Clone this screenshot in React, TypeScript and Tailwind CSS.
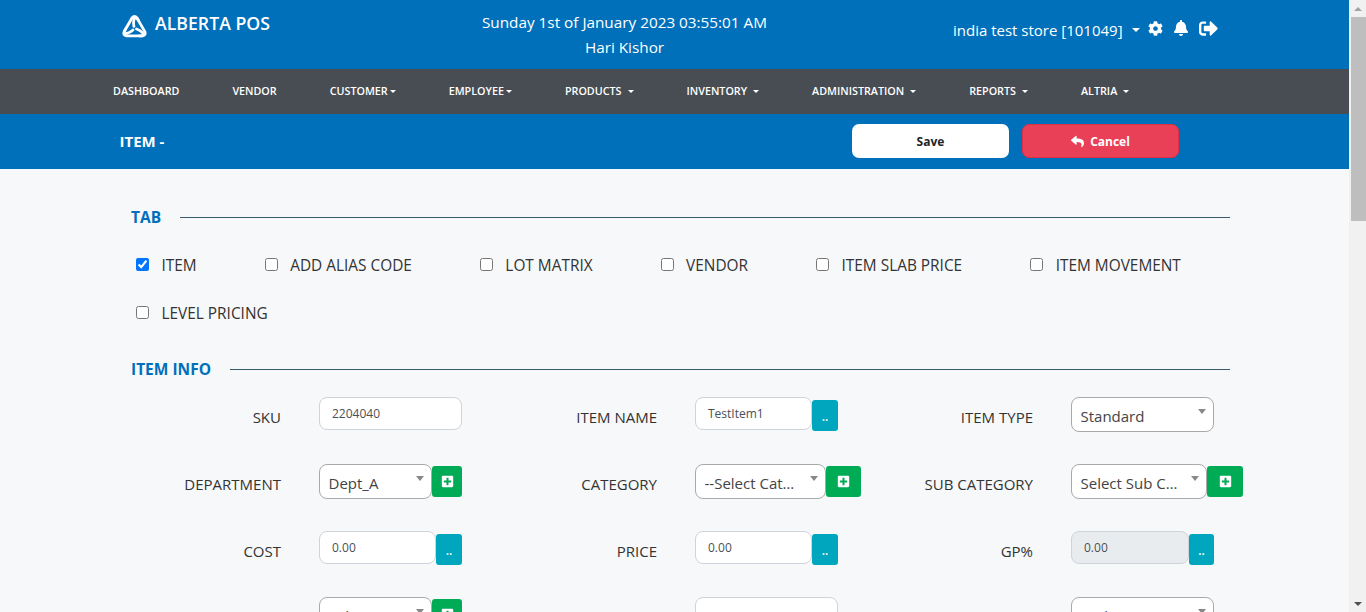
import { ReactNode } from "react";
import { FaBell, FaCog, FaPlusSquare, FaReply } from "react-icons/fa";

const navItems = [
  { label: "DASHBOARD" },
  { label: "VENDOR" },
  { label: "CUSTOMER", caret: "tight" },
  { label: "EMPLOYEE", caret: "tight" },
  { label: "PRODUCTS", caret: "wide" },
  { label: "INVENTORY", caret: "wide" },
  { label: "ADMINISTRATION", caret: "wide" },
  { label: "REPORTS", caret: "wide" },
  { label: "ALTRIA", caret: "wide" },
];

const tabs = [
  "ITEM",
  "ADD ALIAS CODE",
  "LOT MATRIX",
  "VENDOR",
  "ITEM SLAB PRICE",
  "ITEM MOVEMENT",
  "LEVEL PRICING",
];

const swoosh = "M11 16 C7 19.500 2 21 2.500 17 L10 4 Q12.500 1 15 4 L16.500 6.500";

const Logo = () => (
  <svg viewBox="0 0 25 25" className="w-[25px] h-[25px] mt-[2px]" fill="none" stroke="white" strokeWidth="2.800" strokeLinecap="round" strokeLinejoin="round">
    <path d={swoosh} />
    <path d={swoosh} transform="rotate(120 12.500 14.500)" />
    <path d={swoosh} transform="rotate(240 12.500 14.500)" />
  </svg>
);

const SignOut = () => (
  <svg viewBox="0 0 512 512" className="w-[19px] h-[19px]" fill="white">
    <path d="M497 273L329 441c-15 15-41 4.500-41-17v-96H152c-13.300 0-24-10.700-24-24v-96c0-13.300 10.700-24 24-24h136V88c0-21.400 25.900-32 41-17l168 168c9.300 9.400 9.300 24.600 0 34zM192 436v-40c0-6.600-5.400-12-12-12H96c-17.700 0-32-14.300-32-32V160c0-17.700 14.300-32 32-32h84c6.600 0 12-5.400 12-12V76c0-6.600-5.400-12-12-12H96c-53 0-96 43-96 96v192c0 53 43 96 96 96h84c6.600 0 12-5.400 12-12z" />
  </svg>
);

const Caret = ({ className = "" }: { className?: string }) => (
  <span className={`inline-block w-0 h-0 border-x-[4px] border-x-transparent border-t-[4px] border-t-white ${className}`} />
);

const SectionTitle = ({ title }: { title: string }) => (
  <div className="flex items-center gap-[19px]">
    <span className="text-[15.500px] leading-5 font-bold text-[#0070ba]">{title}</span>
    <div className="flex-1 h-px bg-[#3a5a70]" />
  </div>
);

const Input = ({ value, width, disabled }: { value?: string; width: string; disabled?: boolean }) => (
  <div
    className={`${width} h-[33px] shrink-0 flex items-center pl-[12px] text-[12px] text-[#495057] border border-[#ced4da] rounded-[8px] ${
      disabled ? "bg-[#e9ecef]" : "bg-white"
    }`}
  >
    {value}
  </div>
);

const Select = ({ value, width }: { value: string; width: string }) => (
  <div className={`${width} h-[35px] shrink-0 flex pl-[8.500px] pr-[7px] bg-white border border-[#aaaaaa] rounded-[8px] text-[#444] text-[15px]`}>
    <span className="flex-1 min-w-0 truncate leading-[36px]">{value}</span>
    <span className="w-0 h-0 mt-[11px] ml-[8px] shrink-0 border-x-[4px] border-x-transparent border-t-[5px] border-t-[#888]" />
  </div>
);

const DotsButton = ({ width = "w-[26px]" }: { width?: string }) => (
  <div className={`${width} h-[31px] mt-[3px] shrink-0 flex items-center justify-center pt-[3px] bg-[#00a6bd] rounded-[3px] text-white text-[12px] font-semibold`}>
    ..
  </div>
);

const PlusButton = ({ width }: { width: string }) => (
  <div className={`${width} h-[31px] mt-[2px] shrink-0 flex items-center justify-center bg-[#00ab55] rounded-[3px] text-white`}>
    <FaPlusSquare className="w-[13px] h-[13px]" />
  </div>
);

const Field = ({ label, children }: { label?: string; children: ReactNode }) => (
  <div className="w-[376px] shrink-0 flex">
    <div className="w-[150px] pt-[9px] text-right text-[15px] leading-[22px] text-[#333] whitespace-nowrap">{label}</div>
    <div className="ml-[38px] flex items-start">{children}</div>
  </div>
);

export default function App() {
  return (
    <div className="flex h-[612px] overflow-hidden bg-[#f1f1f1] font-['Open_Sans',sans-serif]">
      <div className="w-[1349px] shrink-0 bg-[#f7f8fa]">
        {/* Header */}
        <header className="h-[69px] flex bg-[#0070ba] text-white">
          <div className="w-[400px] pl-[122px] pt-[12px] flex items-start gap-[8px]">
            <Logo />
            <span className="-mt-px text-[17.700px] leading-6 font-semibold">ALBERTA POS</span>
          </div>
          <div className="w-[449px] pt-[10px] text-center text-[15.300px] leading-[25px]">
            <div>Sunday 1st of January 2023 03:55:01 AM</div>
            <div>Hari Kishor</div>
          </div>
          <div className="ml-[104px] pt-[18px] flex items-start text-[15px] leading-6">
            <span>india test store [101049]</span>
            <Caret className="ml-[9px] mt-[10px]" />
            <FaCog className="ml-[8px] mt-[3px] w-[15px] h-[15px]" />
            <FaBell className="ml-[10px] mt-[2px] w-[16px] h-[16px]" />
            <span className="ml-[10px] mt-[1px]">
              <SignOut />
            </span>
          </div>
        </header>

        {/* Nav */}
        <nav className="h-[45px] flex items-center gap-[53px] pl-[113px] bg-[#484d53] text-white text-[10.750px] font-semibold">
          {navItems.map((item) => (
            <div key={item.label} className="flex items-center">
              <span>{item.label}</span>
              {item.caret && <Caret className={item.caret === "tight" ? "ml-[2px] !border-x-[3.500px] !border-t-[3.500px]" : "ml-[6px] !border-x-[3.500px] !border-t-[3.500px]"} />}
            </div>
          ))}
        </nav>

        {/* Title bar */}
        <div className="h-[55px] flex items-center bg-[#0070ba] pl-[119.500px] pb-px text-white">
          <span className="w-[732.500px] text-[15px] font-bold">ITEM -</span>
          <button className="w-[157px] h-[34px] pt-px bg-white rounded-[7px] text-[#212529] text-[12px] font-bold">Save</button>
          <button className="ml-[13px] w-[157px] h-[34px] pt-px flex items-center justify-center gap-[6px] bg-[#e94057] border border-[#dc2f45] rounded-[7px] text-white text-[12px] font-bold">
            <FaReply className="w-[13px] h-[13px]" />
            Cancel
          </button>
        </div>

        {/* Form */}
        <main className="pl-[131px] pr-[119px] pt-[38px]">
          <SectionTitle title="TAB" />
          <div className="mt-[27px] pl-[5px] flex flex-wrap gap-x-[68px] gap-y-[26px]">
            {tabs.map((tab) => (
              <label key={tab} className="flex items-center gap-[12.500px] h-[22px] text-[15.400px] text-[#333]">
                <input type="checkbox" className="-mt-[2px]" defaultChecked={tab === "ITEM"} />
                <span className="pt-[2px]">{tab}</span>
              </label>
            ))}
          </div>

          <div className="mt-[35px]">
            <SectionTitle title="ITEM INFO" />
          </div>

          <div className="mt-[18px] flex flex-col">
            <div className="h-[67px] flex">
              <Field label="SKU">
                <Input value="2204040" width="w-[143px]" />
              </Field>
              <Field label="ITEM NAME">
                <Input value="TestItem1" width="w-[117px]" />
                <DotsButton />
              </Field>
              <Field label="ITEM TYPE">
                <Select value="Standard" width="w-[143px]" />
              </Field>
            </div>
            <div className="h-[67px] flex">
              <Field label="DEPARTMENT">
                <Select value="Dept_A" width="w-[113px]" />
                <PlusButton width="w-[30px]" />
              </Field>
              <Field label="CATEGORY">
                <Select value="--Select Category--" width="w-[131px]" />
                <PlusButton width="w-[35px]" />
              </Field>
              <Field label="SUB CATEGORY">
                <Select value="Select Sub Category" width="w-[136px]" />
                <PlusButton width="w-[36px]" />
              </Field>
            </div>
            <div className="h-[66px] flex">
              <Field label="COST">
                <Input value="0.00" width="w-[117px]" />
                <DotsButton />
              </Field>
              <Field label="PRICE">
                <Input value="0.00" width="w-[117px]" />
                <DotsButton />
              </Field>
              <Field label="GP%">
                <Input value="0.00" width="w-[118px]" disabled />
                <DotsButton width="w-[25px]" />
              </Field>
            </div>
            <div className="h-[67px] flex">
              <Field>
                <Select value="Select Supplier" width="w-[113px]" />
                <PlusButton width="w-[30px]" />
              </Field>
              <Field>
                <Input width="w-[143px]" />
              </Field>
              <Field>
                <Select value="Each" width="w-[143px]" />
              </Field>
            </div>
          </div>
        </main>
      </div>

      {/* Scrollbar */}
      <div className="w-[17px] shrink-0 flex flex-col items-end">
        <div className="w-full h-[17px] flex items-center justify-center">
          <span className="w-0 h-0 border-x-[4px] border-x-transparent border-b-[4px] border-b-[#a3a3a3]" />
        </div>
        <div className="w-[15px] h-[204px] bg-[#bebebe]" />
        <div className="flex-1" />
        <div className="w-full h-[17px] flex items-center justify-center">
          <span className="w-0 h-0 border-x-[4px] border-x-transparent border-t-[4px] border-t-[#505050]" />
        </div>
      </div>
    </div>
  );
}
